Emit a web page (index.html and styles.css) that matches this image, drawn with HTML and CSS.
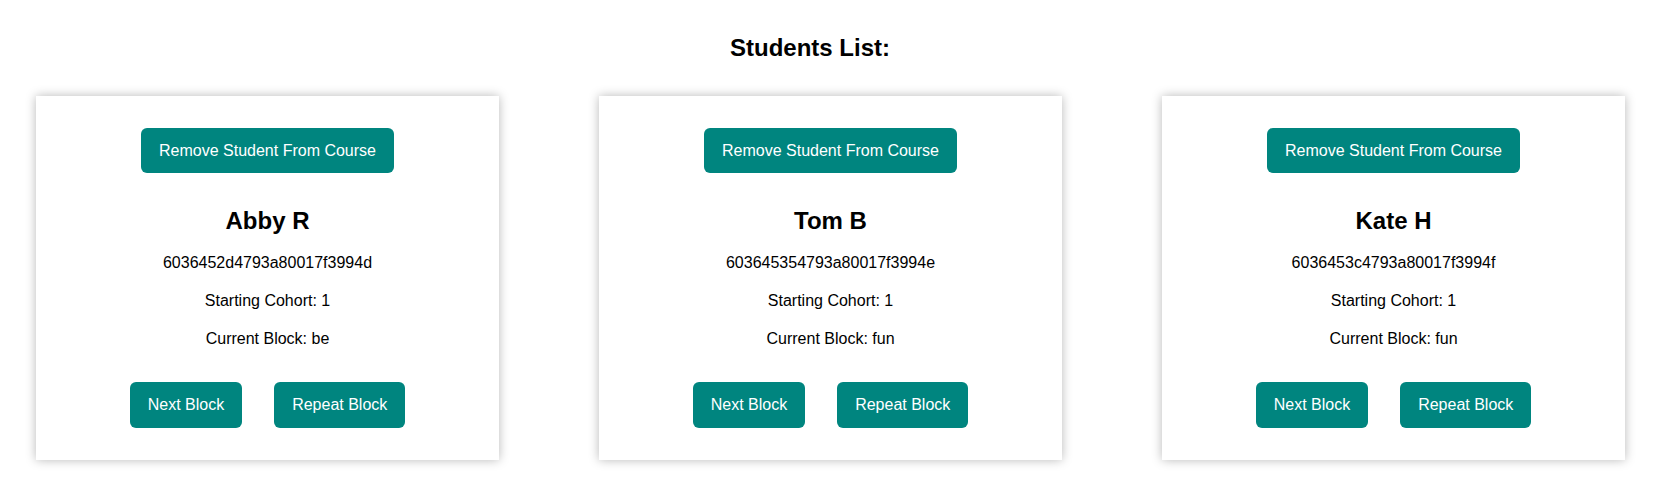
FILE: index.html
```html
<!DOCTYPE html>
<html lang="en">
<head>
<meta charset="utf-8">
<title>Students List</title>
<link rel="stylesheet" href="styles.css">
</head>
<body>
  <header class="page-header">
    <h2 class="page-title">Students List:</h2>
  </header>
  <main class="student-list">
    <section class="student-card">
      <button class="btn btn-remove">Remove Student From Course</button>
      <h2 class="student-name">Abby R</h2>
      <p class="student-line">6036452d4793a80017f3994d</p>
      <p class="student-line">Starting Cohort: 1</p>
      <p class="student-line">Current Block: be</p>
      <div class="card-actions">
        <button class="btn btn-action">Next Block</button>
        <button class="btn btn-action">Repeat Block</button>
      </div>
    </section>
    <section class="student-card">
      <button class="btn btn-remove">Remove Student From Course</button>
      <h2 class="student-name">Tom B</h2>
      <p class="student-line">603645354793a80017f3994e</p>
      <p class="student-line">Starting Cohort: 1</p>
      <p class="student-line">Current Block: fun</p>
      <div class="card-actions">
        <button class="btn btn-action">Next Block</button>
        <button class="btn btn-action">Repeat Block</button>
      </div>
    </section>
    <section class="student-card">
      <button class="btn btn-remove">Remove Student From Course</button>
      <h2 class="student-name">Kate H</h2>
      <p class="student-line">6036453c4793a80017f3994f</p>
      <p class="student-line">Starting Cohort: 1</p>
      <p class="student-line">Current Block: fun</p>
      <div class="card-actions">
        <button class="btn btn-action">Next Block</button>
        <button class="btn btn-action">Repeat Block</button>
      </div>
    </section>
  </main>
</body>
</html>
```

FILE: styles.css
```css
* {
  box-sizing: border-box;
}

html, body {
  margin: 0;
  padding: 0;
  background: #ffffff;
  font-family: "Liberation Sans", Arial, sans-serif;
  color: #000;
}

body {
  min-height: 483px;
}

.page-header {
  padding: 34px 56px 0 0;
  text-align: center;
}

.page-title {
  margin: 0;
  font-size: 24px;
  line-height: 28px;
  font-weight: bold;
}

.student-list {
  display: flex;
  gap: 100px;
  padding: 34px 0 23px 36px;
}

.student-card {
  flex: none;
  width: 463px;
  height: 364px;
  background: #fff;
  box-shadow: 0 0 10px rgba(0, 0, 0, 0.28);
  padding: 32px 0;
  display: flex;
  flex-direction: column;
  align-items: center;
  text-align: center;
}

.btn {
  font-family: "Liberation Sans", Arial, sans-serif;
  font-size: 16px;
  color: #fff;
  background: #00857f;
  border: none;
  border-radius: 6px;
  padding: 0 18px;
  cursor: pointer;
}

.btn-remove {
  height: 45px;
  line-height: 45px;
}

.student-name {
  margin: 34px 0 0;
  font-size: 24px;
  line-height: 28px;
  font-weight: bold;
}

.student-line {
  margin: 18px 0 0;
  font-size: 16px;
  line-height: 20px;
}

.card-actions {
  margin-top: 33px;
  display: flex;
  gap: 32px;
}

.btn-action {
  height: 46px;
  line-height: 46px;
}
```
